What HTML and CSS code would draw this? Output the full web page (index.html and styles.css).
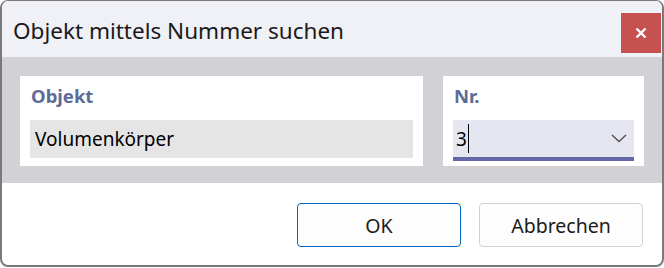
FILE: index.html
```html
<!DOCTYPE html>
<html lang="de">
<head>
<meta charset="utf-8">
<title>Objekt mittels Nummer suchen</title>
<link rel="stylesheet" href="styles.css">
</head>
<body>
<div class="window">
  <div class="titlebar">
    <div class="title">Objekt mittels Nummer suchen</div>
    <button class="close" aria-label="Schließen">
      <svg width="12" height="12" viewBox="0 0 12 12"><path d="M1.5 1.5 L10.5 10.5 M10.5 1.5 L1.5 10.5" stroke="#fff" stroke-width="2.4" fill="none"/></svg>
    </button>
  </div>
  <div class="content">
    <div class="card card-object">
      <div class="label">Objekt</div>
      <div class="field">Volumenkörper</div>
    </div>
    <div class="card card-nr">
      <div class="label">Nr.</div>
      <div class="combo">
        <span class="value">3</span><span class="caret"></span>
        <svg class="chevron" width="16" height="9" viewBox="0 0 16 9"><path d="M1 1 L8 7.5 L15 1" stroke="#555" stroke-width="1.5" fill="none"/></svg>
      </div>
    </div>
  </div>
  <div class="footer">
    <button class="btn btn-ok">OK</button>
    <button class="btn">Abbrechen</button>
  </div>
</div>
</body>
</html>
```

FILE: styles.css
```css
html, body {
  margin: 0;
  padding: 0;
  background: #ffffff;
}
body {
  font-family: "Noto Sans", "Open Sans", sans-serif;
  color: #000;
}
.window {
  box-sizing: border-box;
  width: 664px;
  height: 267px;
  border: 1px solid #7a7a7a;
  border-width: 1px 2px 2px 2px;
  border-radius: 8px;
  overflow: hidden;
  display: flex;
  flex-direction: column;
  background: #ffffff;
}
.titlebar {
  height: 56px;
  flex: none;
  background: #f0f1f6;
  display: flex;
  align-items: flex-start;
  justify-content: space-between;
  padding: 12px 1px 0 11px;
  box-sizing: border-box;
}
.title {
  font-size: 22.5px;
  line-height: 30px;
  margin-top: 3px;
  color: #1a1a1a;
}
.close {
  width: 40px;
  height: 40px;
  border: none;
  padding: 0;
  background: #c75050;
  display: flex;
  align-items: center;
  justify-content: center;
}
.content {
  height: 126px;
  flex: none;
  box-sizing: border-box;
  background: #d2d1d6;
  display: flex;
  gap: 20px;
  padding: 19px 18px 17px 18px;
}
.card {
  background: #ffffff;
  box-sizing: border-box;
  padding: 7px 10px 0 10px;
}
.card-object { width: 403px; }
.card-nr { width: 201px; }
.label {
  font-weight: 700;
  font-size: 18.5px;
  line-height: 25px;
  color: #5c6c97;
  padding-left: 1px;
  margin-bottom: 12px;
}
.field {
  height: 38px;
  background: #e5e5e5;
  font-size: 19px;
  line-height: 38px;
  padding-left: 5px;
}
.combo {
  position: relative;
  height: 37px;
  background: #e6e6f0;
  border-bottom: 4px solid #6466a8;
  display: flex;
  align-items: center;
  padding-left: 3px;
  font-size: 19px;
}
.caret {
  display: inline-block;
  width: 1px;
  height: 29px;
  background: #000;
  margin-left: 1px;
}
.chevron {
  margin-left: auto;
  margin-right: 7px;
}
.footer {
  flex: 1;
  display: flex;
  justify-content: flex-end;
  align-items: flex-start;
  gap: 18px;
  padding: 20px 19px 0 0;
}
.btn {
  width: 164px;
  height: 44px;
  box-sizing: border-box;
  background: #fdfdfd;
  border: 1px solid #d1d1d1;
  border-radius: 4px;
  font-family: "Noto Sans", "Open Sans", sans-serif;
  font-size: 19.5px;
  color: #1a1a1a;
}
.btn-ok {
  border-color: #0067c0;
}
```
